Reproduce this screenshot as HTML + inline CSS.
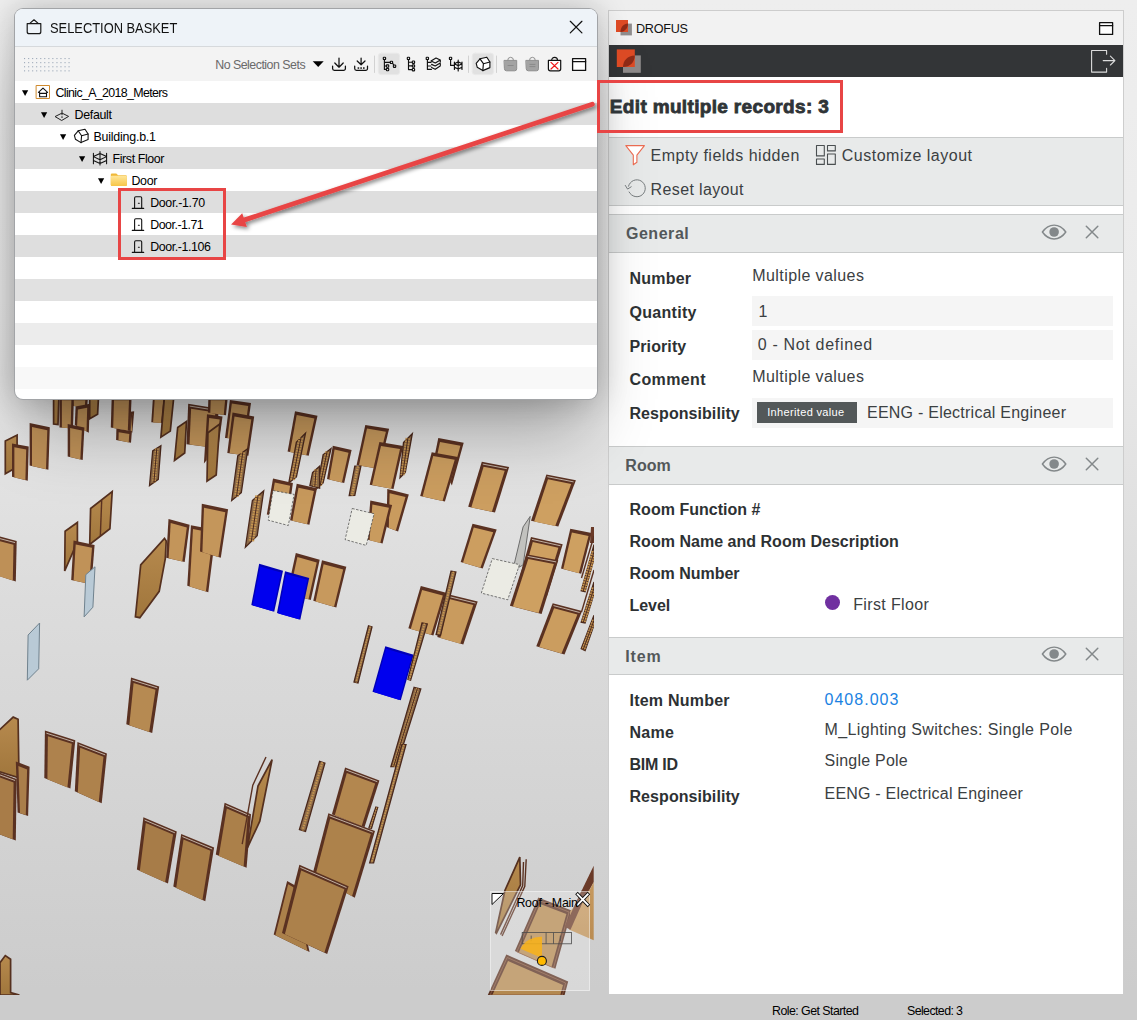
<!DOCTYPE html>
<html><head><meta charset="utf-8"><title>Selection Basket</title>
<style>
*{box-sizing:border-box;margin:0;padding:0}
html,body{width:1137px;height:1020px;overflow:hidden}
body{font-family:"Liberation Sans",sans-serif;position:relative;background:#ccc}
.a{position:absolute}
.tx{position:absolute;white-space:nowrap}
#scene{left:0;top:0;width:1137px;height:1020px;background:linear-gradient(#eeeeee 0px,#ebebeb 300px,#dcdcdc 600px,#cccccc 990px,#cccccc 1020px)}
#panel{left:608px;top:10px;width:516px;height:984px;background:#fff;border:1px solid #cdcdcd;border-bottom:none}
.sec{position:absolute;left:609px;width:514px;background:#e8eaea;border-top:1px solid #c9cbcb;border-bottom:1px solid #c9cbcb}
.inp{position:absolute;left:752px;width:361px;height:30px;background:#f5f5f5}
#basket{left:15px;top:9px;width:582px;height:389.5px;border-radius:8px;background:#fff;box-shadow:0 0 0 1px #a2a4a7,0 0 32px rgba(0,0,0,.235),0 44px 64px -12px rgba(0,0,0,.29);overflow:hidden}
.row{position:absolute;left:0;width:582px;height:22px}
</style></head><body>
<div id="scene" class="a"></div>
<svg class="a" style="left:0;top:399px" width="594" height="596" viewBox="0 399 594 596" stroke-linejoin="miter">
<defs><linearGradient id="tg" x1="0" y1="0" x2="0" y2="1"><stop offset="0" stop-color="#c79a5f"/><stop offset="1" stop-color="#ba8c52"/></linearGradient><linearGradient id="dg" x1="0" y1="0" x2="0" y2="1"><stop offset="0" stop-color="#b78a4e"/><stop offset="1" stop-color="#a0763c"/></linearGradient></defs>
<polygon points="5.3,441.1 17.1,435.1 17.1,467.1 5.3,473.8" fill="url(#dg)" stroke="#55301f" stroke-width="1.7"/>
<polygon points="12.0,443.4 28.7,446.4 27.8,480.7 12.0,476.8" fill="#5a3121"/>
<polygon points="14.4,447.3 26.2,449.4 25.4,480.1 14.4,477.4" fill="#be9057"/>
<polygon points="29.6,423.1 49.8,427.2 48.4,469.8 29.6,465.4" fill="#5a3121"/>
<polygon points="32.0,427.1 47.3,430.2 46.0,469.2 32.0,465.9" fill="#bf9158"/>
<polygon points="53.6,396.8 58.9,396.8 58.0,424.6 53.6,424.0" fill="url(#dg)" stroke="#55301f" stroke-width="1.7"/>
<polygon points="70.4,396.8 88.0,396.8 87.1,408.2 71.2,405.6" fill="#5a3121"/>
<polygon points="73.1,400.2 85.3,400.2 84.7,407.8 73.7,406.0" fill="#c09258"/>
<polygon points="89.7,396.8 98.5,396.8 97.6,414.3 89.7,418.7" fill="url(#dg)" stroke="#55301f" stroke-width="1.7"/>
<polygon points="59.5,396.8 73.9,396.8 73.0,428.4 59.5,427.5" fill="#5a3121"/>
<polygon points="61.9,400.2 71.4,400.2 70.6,428.3 61.9,427.7" fill="#c09258"/>
<polygon points="75.6,406.4 89.7,403.8 88.8,432.8 74.8,424.9" fill="#5a3121"/>
<polygon points="77.9,409.5 87.2,407.7 86.5,431.5 77.1,426.2" fill="#c09258"/>
<polygon points="67.7,424.0 84.4,427.5 82.7,460.1 67.7,456.6" fill="#5a3121"/>
<polygon points="70.1,428.0 81.9,430.5 80.3,459.5 70.1,457.1" fill="#c09258"/>
<polygon points="130.2,411.7 134.2,411.2 132.3,432.8 130.2,431.1" fill="#5a3121"/>
<polygon points="132.0,413.9 132.2,413.9 130.6,431.4 132.0,432.6" fill="#c29459"/>
<polygon points="116.4,428.4 131.9,431.1 131.0,442.8 116.1,439.9" fill="#5a3121"/>
<polygon points="118.7,432.3 129.3,434.1 128.7,442.4 118.5,440.3" fill="#c19359"/>
<polygon points="111.7,396.8 131.6,396.8 130.2,431.1 110.8,427.5" fill="#5a3121"/>
<polygon points="114.0,400.2 129.0,400.2 127.8,430.6 113.2,428.0" fill="#c19359"/>
<polygon points="153.0,396.8 165.3,396.8 162.7,423.1 151.3,422.3" fill="#5a3121"/>
<polygon points="154.7,399.2 163.3,399.2 160.9,423.0 153.1,422.4" fill="#c2945a"/>
<polygon points="160.9,437.2 164.5,396.8 173.8,396.8 170.3,431.1" fill="url(#dg)" stroke="#55301f" stroke-width="1.7"/>
<polygon points="177.7,427.5 186.5,421.4 184.7,453.0 174.5,460.4" fill="url(#dg)" stroke="#55301f" stroke-width="1.7"/>
<polygon points="188.2,403.8 219.0,408.7 214.6,447.8 186.5,444.3" fill="#5a3121"/>
<polygon points="191.1,408.7 215.4,412.6 211.5,447.4 189.5,444.6" fill="#c4965b"/>
<polyline points="189.7,406.1 217.2,410.5" fill="none" stroke="#d9cfc4" stroke-width=".8"/>
<polygon points="152.7,450.9 160.9,445.7 158.3,479.4 149.5,485.6" fill="#8c6a48" stroke="#4a281b" stroke-width="1.3"/>
<line x1="156.8" y1="448.3" x2="153.9" y2="482.5" stroke="#c79650" stroke-width="3.7" stroke-dasharray="1.6 1"/>
<line x1="156.8" y1="448.3" x2="153.9" y2="482.5" stroke="#4e2a1c" stroke-width="1"/>
<polygon points="90.6,508.5 112.2,491.7 109.9,528.7 89.7,544.5" fill="url(#dg)" stroke="#55301f" stroke-width="1.7"/>
<polyline points="101.7,500.2 100.3,536.6" fill="none" stroke="#5a3121" stroke-width="1.4"/>
<polygon points="65.1,531.3 77.4,522.5 77.4,541.9 64.7,570.9" fill="url(#dg)" stroke="#55301f" stroke-width="1.7"/>
<polygon points="73.5,540.6 94.6,544.9 91.5,584.3 71.2,579.9" fill="#5a3121"/>
<polygon points="75.7,544.5 92.0,547.8 89.1,583.8 73.6,580.4" fill="#c09258"/>
<polygon points="-10.6,533.8 16.7,541.0 15.8,581.6 -10.6,572.8" fill="#5a3121"/>
<polygon points="-7.5,539.2 13.5,544.7 12.8,580.6 -7.5,573.9" fill="#be9057"/>
<polyline points="-9.0,536.3 15.1,542.6" fill="none" stroke="#d9cfc4" stroke-width=".8"/>
<polygon points="140.7,564.9 164.5,538.4 166.2,541.0 165.3,558.6 159.2,591.3 139.8,617.7 135.4,616.8" fill="url(#dg)" stroke="#55301f" stroke-width="1.7"/>
<polygon points="168.5,519.0 189.6,524.8 184.7,562.1 166.2,557.7" fill="#5a3121"/>
<polygon points="170.7,523.1 186.8,527.6 182.3,561.5 168.6,558.3" fill="#c3955a"/>
<polygon points="190.9,525.2 216.0,530.1 208.3,592.2 187.3,585.7" fill="#5a3121"/>
<polygon points="193.0,529.1 213.2,533.0 205.9,591.5 189.7,586.4" fill="#c4965b"/>
<polygon points="208.4,396.8 227.8,396.8 226.0,415.2 207.9,412.6" fill="#5a3121"/>
<polygon points="210.7,400.2 225.1,400.2 223.7,414.9 210.3,412.9" fill="#c4965b"/>
<polygon points="207.0,414.3 222.5,416.5 218.5,446.0 203.9,463.6" fill="#5a3121"/>
<polygon points="209.2,418.1 219.7,419.5 215.6,449.5 206.5,460.5" fill="#c4965b"/>
<polygon points="207.9,432.8 219.7,424.0 216.2,475.0 207.0,481.2" fill="url(#dg)" stroke="#55301f" stroke-width="1.7"/>
<polygon points="229.9,399.9 251.0,402.9 246.1,439.0 225.0,438.1" fill="#5a3121"/>
<polygon points="231.8,403.6 248.2,405.9 243.7,438.9 227.4,438.2" fill="#c5975b"/>
<polygon points="232.5,412.6 254.2,416.5 248.4,455.7 227.3,453.0" fill="#5a3121"/>
<polygon points="234.5,416.4 251.3,419.4 246.0,455.4 229.6,453.3" fill="#c5975b"/>
<polygon points="237.8,455.7 247.8,448.6 241.3,492.6 231.7,500.5" fill="#8c6a48" stroke="#4a281b" stroke-width="1.3"/>
<line x1="242.8" y1="452.2" x2="236.5" y2="496.6" stroke="#c79650" stroke-width="4.7" stroke-dasharray="1.6 1"/>
<line x1="242.8" y1="452.2" x2="236.5" y2="496.6" stroke="#4e2a1c" stroke-width="1"/>
<polygon points="295.0,411.2 317.5,415.8 308.7,455.7 287.6,451.6" fill="#5a3121"/>
<polygon points="296.7,415.0 314.4,418.6 306.3,455.2 290.0,452.1" fill="#c7995c"/>
<polygon points="296.4,442.1 305.5,433.3 296.4,476.8 288.8,483.0" fill="#8c6a48" stroke="#4a281b" stroke-width="1.3"/>
<line x1="301.0" y1="437.7" x2="292.6" y2="479.9" stroke="#c79650" stroke-width="4.8" stroke-dasharray="1.6 1"/>
<line x1="301.0" y1="437.7" x2="292.6" y2="479.9" stroke="#4e2a1c" stroke-width="1"/>
<polygon points="332.8,445.7 351.6,449.9 344.2,483.0 327.0,479.1" fill="#5a3121"/>
<polygon points="334.6,449.5 348.5,452.7 341.9,482.4 329.3,479.6" fill="#c89a5d"/>
<polygon points="323.1,454.8 331.0,448.6 323.1,483.0 317.0,488.2" fill="#8c6a48" stroke="#4a281b" stroke-width="1.3"/>
<line x1="327.1" y1="451.7" x2="320.1" y2="485.6" stroke="#c79650" stroke-width="3.8" stroke-dasharray="1.6 1"/>
<line x1="327.1" y1="451.7" x2="320.1" y2="485.6" stroke="#4e2a1c" stroke-width="1"/>
<polygon points="312.6,472.4 319.6,466.2 319.6,488.2 309.9,485.6" fill="#8c6a48" stroke="#4a281b" stroke-width="1.3"/>
<line x1="316.1" y1="469.3" x2="314.8" y2="486.9" stroke="#c79650" stroke-width="3.6" stroke-dasharray="1.6 1"/>
<line x1="316.1" y1="469.3" x2="314.8" y2="486.9" stroke="#4e2a1c" stroke-width="1"/>
<polygon points="365.3,424.9 389.1,428.8 379.4,468.9 356.6,465.0" fill="#5a3121"/>
<polygon points="367.0,428.6 385.9,431.7 377.0,468.5 358.9,465.4" fill="#c99b5e"/>
<polygon points="379.4,442.1 403.2,446.0 393.5,489.1 369.7,484.7" fill="#5a3121"/>
<polygon points="381.0,445.9 400.0,448.9 391.1,488.7 372.1,485.1" fill="#c99b5e"/>
<polygon points="354.8,466.2 360.9,466.2 354.8,495.3 349.2,495.6" fill="#8c6a48" stroke="#4a281b" stroke-width="1.3"/>
<line x1="357.9" y1="466.2" x2="352.0" y2="495.4" stroke="#c79650" stroke-width="2.3" stroke-dasharray="1.6 1"/>
<polygon points="273.0,478.6 292.9,483.0 288.0,518.1 266.8,514.6" fill="#5a3121"/>
<polygon points="274.8,482.4 290.1,485.8 285.6,517.7 269.2,515.0" fill="#c6985c"/>
<polygon points="273.0,490.5 294.1,494.4 288.3,525.5 268.2,520.2" fill="#ebebe4" stroke="#444" stroke-width=".7" stroke-dasharray="2.5 1.5"/>
<polygon points="296.7,483.8 317.0,488.2 309.4,524.8 290.1,520.2" fill="#5a3121"/>
<polygon points="298.5,487.7 313.9,491.0 307.1,524.3 292.4,520.8" fill="#c7995c"/>
<polygon points="252.4,500.5 263.7,490.9 257.2,535.7 245.4,547.2" fill="#8c6a48" stroke="#4a281b" stroke-width="1.3"/>
<line x1="258.0" y1="495.7" x2="251.3" y2="541.4" stroke="#c79650" stroke-width="5.6" stroke-dasharray="1.6 1"/>
<line x1="258.0" y1="495.7" x2="251.3" y2="541.4" stroke="#4e2a1c" stroke-width="1"/>
<polygon points="201.8,503.7 228.1,509.3 220.8,557.7 200.0,551.6" fill="#5a3121"/>
<polygon points="204.0,507.7 225.3,512.2 218.4,557.0 202.4,552.3" fill="#c4965b"/>
<polygon points="387.3,489.1 408.8,494.4 398.1,531.5 386.5,526.9" fill="#5a3121"/>
<polygon points="389.6,493.2 405.5,497.1 395.8,530.6 388.8,527.9" fill="#c99b5e"/>
<polygon points="370.3,500.5 392.1,504.9 382.6,543.6 367.1,539.6" fill="#5a3121"/>
<polygon points="372.4,504.4 388.9,507.8 380.3,543.0 369.5,540.2" fill="#c99b5e"/>
<polygon points="352.2,508.5 374.1,513.7 366.2,545.4 345.1,539.6" fill="#ebebe4" stroke="#444" stroke-width=".7" stroke-dasharray="2.5 1.5"/>
<polygon points="403.5,442.5 412.3,433.7 405.3,472.4 400.0,477.7" fill="#8c6a48" stroke="#4a281b" stroke-width="1.3"/>
<line x1="407.9" y1="438.1" x2="402.6" y2="475.0" stroke="#c79650" stroke-width="4.7" stroke-dasharray="1.6 1"/>
<line x1="407.9" y1="438.1" x2="402.6" y2="475.0" stroke="#4e2a1c" stroke-width="1"/>
<polygon points="438.3,438.1 463.7,442.8 451.9,485.6 435.2,453.0" fill="#5a3121"/>
<polygon points="440.0,441.9 460.4,445.7 450.3,482.4 436.9,456.4" fill="#cb9d5f"/>
<polygon points="431.7,452.2 458.0,456.9 444.9,501.4 420.2,496.1" fill="#5a3121"/>
<polygon points="433.2,455.9 454.7,459.8 442.5,500.9 422.6,496.6" fill="#cb9d5f"/>
<polygon points="481.8,461.8 509.1,467.1 495.0,512.5 468.2,506.7" fill="#5a3121"/>
<polygon points="483.6,466.7 504.7,470.8 491.9,511.8 471.3,507.4" fill="#cc9e60"/>
<polyline points="482.8,464.1 506.9,468.7" fill="none" stroke="#d9cfc4" stroke-width=".8"/>
<polygon points="546.4,474.5 575.9,480.3 558.3,526.6 531.0,520.8" fill="#5a3121"/>
<polygon points="548.0,479.3 571.2,483.9 555.2,525.9 534.1,521.4" fill="#cea061"/>
<polyline points="547.3,476.7 573.6,481.9" fill="none" stroke="#d9cfc4" stroke-width=".8"/>
<polygon points="472.5,523.8 496.7,529.6 482.7,568.4 460.7,562.1" fill="#5a3121"/>
<polygon points="473.8,527.6 493.2,532.2 480.4,567.8 463.0,562.8" fill="#cc9e60"/>
<polygon points="523.1,526.9 530.2,516.4 523.1,564.9 512.6,570.9" fill="#c2c2bf" stroke="#6c6c6c" stroke-width="1"/>
<polygon points="85.8,574.7 95.0,566.8 92.9,607.2 84.1,616.9" fill="#b9cad6" stroke="#70828e" stroke-width="1"/>
<polygon points="28.1,635.0 39.6,623.0 38.7,668.8 27.3,680.2" fill="#b9cad6" stroke="#70828e" stroke-width="1"/>
<polygon points="131.0,677.6 159.2,686.4 152.2,733.0 126.3,724.2" fill="#5a3121"/>
<polygon points="133.6,683.0 155.5,689.8 149.2,732.0 129.3,725.2" fill="#b68a52"/>
<polyline points="132.4,680.1 157.3,687.9" fill="none" stroke="#d9cfc4" stroke-width=".8"/>
<polygon points="295.8,553.0 319.7,559.7 310.8,600.0 287.0,593.3" fill="#5a3121"/>
<polygon points="297.4,557.0 316.7,562.4 308.5,599.3 289.3,594.0" fill="#c7995c"/>
<polygon points="322.0,560.3 346.3,566.7 336.3,607.5 313.3,600.8" fill="#5a3121"/>
<polygon points="323.6,564.2 343.2,569.4 334.0,606.8 315.6,601.5" fill="#c7995d"/>
<polygon points="259.2,563.8 283.0,570.8 274.2,611.7 251.3,605.0" fill="#0000b8"/>
<polygon points="260.2,566.4 281.1,572.5 272.8,611.3 252.7,605.4" fill="#0000ee"/>
<polygon points="285.0,571.3 309.2,578.0 300.3,619.7 277.0,613.0" fill="#0000b8"/>
<polygon points="286.0,573.9 307.3,579.8 298.9,619.3 278.4,613.4" fill="#0000ee"/>
<polygon points="368.5,625.8 372.0,627.0 358.0,683.0 354.0,682.0" fill="#8c6a48" stroke="#4a281b" stroke-width="1.3"/>
<line x1="370.2" y1="626.4" x2="356.0" y2="682.5" stroke="#c79650" stroke-width="1.4" stroke-dasharray="1.6 1"/>
<polygon points="385.3,646.3 413.7,654.7 400.8,700.3 372.5,691.7" fill="#0000b8"/>
<polygon points="386.1,648.8 411.7,656.4 399.4,699.9 373.9,692.1" fill="#0000ee"/>
<polygon points="420.8,586.1 446.1,592.8 433.4,635.4 408.4,628.3" fill="#5a3121"/>
<polygon points="422.1,590.0 442.8,595.4 431.1,634.7 410.8,629.0" fill="#c99b5e"/>
<polygon points="447.1,594.0 477.7,601.6 463.3,644.5 437.3,637.1" fill="#5a3121"/>
<polygon points="449.2,599.1 473.3,605.0 460.3,643.7 440.3,638.0" fill="#c99b5e"/>
<polyline points="448.2,596.4 475.6,603.1" fill="none" stroke="#d9cfc4" stroke-width=".8"/>
<polygon points="451.0,571.2 455.9,572.0 440.5,635.4 436.1,634.5" fill="#8c6a48" stroke="#4a281b" stroke-width="1.3"/>
<line x1="453.5" y1="571.6" x2="438.3" y2="634.9" stroke="#c79650" stroke-width="1.9" stroke-dasharray="1.6 1"/>
<polygon points="422.0,623.0 427.3,623.9 410.6,680.2 407.9,679.3" fill="#8c6a48" stroke="#4a281b" stroke-width="1.3"/>
<line x1="424.6" y1="623.5" x2="409.2" y2="679.8" stroke="#c79650" stroke-width="2.0" stroke-dasharray="1.6 1"/>
<polygon points="552.7,603.3 582.1,611.1 564.5,654.4 536.3,646.3" fill="#5a3121"/>
<polygon points="554.1,608.3 577.4,614.4 561.5,653.5 539.3,647.1" fill="#cb9d5f"/>
<polyline points="553.5,605.6 579.7,612.5" fill="none" stroke="#d9cfc4" stroke-width=".8"/>
<polygon points="531.0,537.1 562.7,544.2 547.0,596.0 516.0,590.0" fill="#5a3121"/>
<polygon points="532.8,542.0 558.4,547.7 543.9,595.4 519.1,590.6" fill="#cea061"/>
<polyline points="532.0,539.4 560.6,545.8" fill="none" stroke="#d9cfc4" stroke-width=".8"/>
<polygon points="570.3,528.7 591.7,533.1 581.2,573.8 561.0,568.5" fill="#5a3121"/>
<polygon points="571.9,532.5 588.5,535.9 578.9,573.2 563.3,569.1" fill="#cea061"/>
<polygon points="591.0,527.0 594.0,527.0 594.0,543.0 590.0,543.0" fill="#6a3a28"/>
<polygon points="594.0,544.7 594.0,558.4 585.1,591.8 581.2,590.8" fill="#8c6a48" stroke="#4a281b" stroke-width="1.3"/>
<line x1="594.0" y1="551.5" x2="583.2" y2="591.3" stroke="#c79650" stroke-width="5.2" stroke-dasharray="1.6 1"/>
<line x1="594.0" y1="551.5" x2="583.2" y2="591.3" stroke="#4e2a1c" stroke-width="1"/>
<polygon points="594.0,582.0 594.0,593.7 585.1,623.1 581.2,622.2" fill="#8c6a48" stroke="#4a281b" stroke-width="1.3"/>
<line x1="594.0" y1="587.9" x2="583.2" y2="622.7" stroke="#c79650" stroke-width="4.4" stroke-dasharray="1.6 1"/>
<line x1="594.0" y1="587.9" x2="583.2" y2="622.7" stroke="#4e2a1c" stroke-width="1"/>
<polygon points="594.0,615.3 594.0,625.1 585.1,650.6 581.2,648.6" fill="#8c6a48" stroke="#4a281b" stroke-width="1.3"/>
<line x1="594.0" y1="620.2" x2="583.2" y2="649.6" stroke="#c79650" stroke-width="3.7" stroke-dasharray="1.6 1"/>
<line x1="594.0" y1="620.2" x2="583.2" y2="649.6" stroke="#4e2a1c" stroke-width="1"/>
<polyline points="594.0,536.0 581.5,578.0" fill="none" stroke="#5a3121" stroke-width="1.4"/>
<polyline points="594.0,570.0 581.5,612.0" fill="none" stroke="#5a3121" stroke-width="1.4"/>
<polygon points="526.6,554.2 558.3,560.3 541.6,613.9 509.9,605.8" fill="#5a3121"/>
<polygon points="528.3,559.0 553.9,563.9 538.6,613.1 512.9,606.6" fill="#cea061"/>
<polyline points="527.6,556.4 556.1,561.9" fill="none" stroke="#d9cfc4" stroke-width=".8"/>
<polygon points="492.3,558.6 519.5,564.6 507.7,599.8 481.3,593.1" fill="#ebebe4" stroke="#444" stroke-width=".7" stroke-dasharray="2.5 1.5"/>
<polygon points="-1.8,731.1 13.2,717.1 18.1,719.2 19.0,777.9 -1.8,771.2" fill="url(#dg)" stroke="#55301f" stroke-width="1.7"/>
<polygon points="15.8,761.4 29.6,766.7 28.1,815.9 17.6,812.4" fill="#5a3121"/>
<polygon points="18.4,766.0 27.1,769.4 25.8,815.1 20.0,813.2" fill="#aa7e4a"/>
<polygon points="-10.6,768.9 16.7,779.0 15.8,840.5 -10.6,830.3" fill="#5a3121"/>
<polygon points="-7.5,774.8 13.6,782.5 12.7,839.3 -7.5,831.5" fill="#a87c48"/>
<polyline points="-9.0,771.7 15.1,780.5" fill="none" stroke="#d9cfc4" stroke-width=".8"/>
<polygon points="44.9,730.6 75.3,740.3 70.4,788.6 44.3,778.1" fill="#5a3121"/>
<polygon points="47.9,736.2 71.8,743.8 67.4,787.4 47.4,779.3" fill="#ae824d"/>
<polyline points="46.4,733.2 73.5,741.8" fill="none" stroke="#d9cfc4" stroke-width=".8"/>
<polygon points="77.4,742.0 106.9,753.5 101.7,803.2 74.8,791.3" fill="#5a3121"/>
<polygon points="80.2,747.8 103.5,756.8 98.7,801.9 77.8,792.6" fill="#ae824c"/>
<polyline points="78.9,744.7 105.2,754.9" fill="none" stroke="#d9cfc4" stroke-width=".8"/>
<polygon points="143.4,817.3 176.8,831.4 168.0,883.6 136.9,869.6" fill="#5a3121"/>
<polygon points="145.8,823.1 173.1,834.6 165.1,882.3 139.8,870.9" fill="#a77c48"/>
<polyline points="144.6,820.0 174.9,832.8" fill="none" stroke="#d9cfc4" stroke-width=".8"/>
<polygon points="181.2,833.9 214.1,847.6 205.3,901.2 173.3,886.6" fill="#5a3121"/>
<polygon points="183.5,839.6 210.4,850.8 202.4,899.9 176.2,887.9" fill="#a87d48"/>
<polyline points="182.4,836.6 212.2,849.0" fill="none" stroke="#d9cfc4" stroke-width=".8"/>
<polygon points="224.6,802.7 251.0,814.2 246.6,867.8 215.8,854.6" fill="#5a3121"/>
<polygon points="226.8,808.5 247.6,817.5 243.6,866.5 218.8,855.9" fill="#ab804a"/>
<polyline points="225.8,805.4 249.3,815.6" fill="none" stroke="#d9cfc4" stroke-width=".8"/>
<polygon points="258.0,786.0 272.1,759.6 259.8,821.2 247.5,847.6" fill="url(#dg)" stroke="#55301f" stroke-width="1.7"/>
<polyline points="266.0,757.0 252.8,785.1 242.2,844.1" fill="none" stroke="#5a3121" stroke-width="1.4"/>
<polygon points="319.6,761.4 324.9,763.1 305.5,831.4 299.4,829.6" fill="#8c6a48" stroke="#4a281b" stroke-width="1.3"/>
<line x1="322.3" y1="762.3" x2="302.5" y2="830.5" stroke="#c79650" stroke-width="2.1" stroke-dasharray="1.6 1"/>
<polygon points="375.9,807.1 377.7,807.5 371.5,828.2 368.9,827.9" fill="#8c6a48" stroke="#4a281b" stroke-width="1.3"/>
<line x1="376.8" y1="807.3" x2="370.2" y2="828.1" stroke="#c79650" stroke-width="1.1" stroke-dasharray="1.6 1"/>
<polygon points="345.1,767.5 379.4,780.4 364.5,827.3 331.9,814.2" fill="#5a3121"/>
<polygon points="346.8,772.9 375.2,783.5 361.6,826.2 334.8,815.3" fill="#b3874f"/>
<polyline points="346.1,770.0 377.3,781.7" fill="none" stroke="#d9cfc4" stroke-width=".8"/>
<polygon points="328.4,813.3 375.0,830.9 354.8,897.7 312.6,874.0" fill="#5a3121"/>
<polygon points="330.2,818.7 370.8,834.0 352.0,896.2 315.4,875.5" fill="#ad824b"/>
<polyline points="329.4,815.8 372.9,832.2" fill="none" stroke="#d9cfc4" stroke-width=".8"/>
<polygon points="414.1,687.3 420.8,689.0 396.4,766.7 390.9,766.7" fill="#8c6a48" stroke="#4a281b" stroke-width="1.3"/>
<line x1="417.5" y1="688.1" x2="393.6" y2="766.7" stroke="#c79650" stroke-width="2.6" stroke-dasharray="1.6 1"/>
<line x1="417.5" y1="688.1" x2="393.6" y2="766.7" stroke="#4e2a1c" stroke-width="1"/>
<polygon points="401.9,744.7 406.0,744.7 373.6,862.8 369.7,862.8" fill="#8c6a48" stroke="#4a281b" stroke-width="1.3"/>
<line x1="403.9" y1="744.7" x2="371.6" y2="862.8" stroke="#c79650" stroke-width="1.6" stroke-dasharray="1.6 1"/>
<polygon points="287.1,881.0 294.8,885.3 309.6,952.1 273.7,934.5" fill="#5a3121"/>
<polygon points="288.1,884.3 293.4,887.3 307.5,951.1 275.4,935.3" fill="#ab804a"/>
<polygon points="299.4,864.8 348.6,886.3 327.2,953.9 282.0,933.0" fill="#5a3121"/>
<polygon points="301.2,870.4 344.4,889.3 324.4,952.6 284.9,934.3" fill="#ac814b"/>
<polyline points="300.4,867.4 346.5,887.6" fill="none" stroke="#d9cfc4" stroke-width=".8"/>
<polygon points="0.0,962.7 5.3,955.6 10.6,959.2 10.6,992.6 19.4,995.0 0.0,995.0" fill="url(#dg)" stroke="#55301f" stroke-width="1.7"/>
<polygon points="519.8,857.1 520.5,884.9 496.4,933.2 495.7,932.5 504.9,890.5" fill="url(#dg)" stroke="#55301f" stroke-width="1.7"/>
<polyline points="526.2,859.3 524.8,886.3 502.1,936.0" fill="none" stroke="#5a3121" stroke-width="1.4"/>
<polyline points="523.5,862.0 522.7,885.6 500.6,934.6" fill="none" stroke="#5a3121" stroke-width="1.4"/>
<polygon points="538.3,897.6 571.7,910.4 555.4,968.7 514.9,951.0" fill="#5a3121"/>
<polygon points="540.1,903.9 566.4,913.9 551.5,967.0 518.7,952.7" fill="#b3884f"/>
<polygon points="539.3,900.6 569.1,912.0 553.5,967.9 516.8,951.8" fill="none" stroke="#8a5a40" stroke-width=".9"/>
<polygon points="593.7,865.7 581.7,890.5 572.0,911.0 578.0,911.0 593.7,882.0" fill="#6a3a28"/>
<polygon points="570.3,911.1 590.2,889.1 593.7,882.0 593.7,940.3 568.9,929.6" fill="url(#tg)"/>
<polygon points="581.7,890.5 587.5,891.5 570.5,929.8 564.6,926.8" fill="#6a3a28"/>
<polygon points="506.3,954.5 568.2,981.5 564.6,995.0 487.8,995.0" fill="#5a3121"/>
<polygon points="508.0,960.9 563.0,984.9 560.3,995.0 492.4,995.0" fill="#b3884f"/>
<polygon points="507.2,957.5 565.6,983.0 562.4,995.0 490.1,995.0" fill="none" stroke="#8a5a40" stroke-width=".9"/>
</svg>
<svg class="a" style="left:0;top:0" width="1137" height="1020" viewBox="0 0 1137 1020" fill="none">
<rect x="490.500" y="891.500" width="99" height="99" fill="#fff" fill-opacity=".24" stroke="#fff" stroke-opacity=".5" stroke-width="1"/>
<path d="M492 893.500h11.500L492 904.500z" fill="#fff" stroke="#111" stroke-width="1"/>
<g stroke="#4c4c4c" stroke-width=".8"><rect x="522.200" y="932.600" width="49.200" height="11.200"/><path d="M546.100 932.600v11.200M553.500 932.600v11.200M560.300 935.600v5.600M531.200 935.600v5.600"/></g>
<path d="M542 958L520.500 948.800A23 23 0 0 1 542 936.700z" fill="#f7b21a" fill-opacity=".88"/>
<circle cx="541.900" cy="960.900" r="4.500" fill="#ffb900" stroke="#1c1c1c" stroke-width="1.100"/>
<g stroke-linecap="square"><path d="M577.700 894.300l10 10.400M587.700 894.300l-10 10.400" stroke="#111" stroke-width="3.600"/><path d="M577.700 894.300l10 10.400M587.700 894.300l-10 10.400" stroke="#fff" stroke-width="1.900"/></g>
</svg>
<div id="panel" class="a"></div>
<div class="a" style="left:609px;top:11px;width:514px;height:34px;background:#f2f2f2"></div>
<div class="a" style="left:609px;top:45px;width:514px;height:32px;background:#333537"></div>
<div class="sec" style="top:137px;height:69px"></div>
<div class="sec" style="top:214px;height:39px"></div>
<div class="sec" style="top:446px;height:39px"></div>
<div class="sec" style="top:637px;height:38px"></div>
<div class="inp" style="top:296px"></div>
<div class="inp" style="top:330px"></div>
<div class="inp" style="top:398px"></div>
<div class="a" style="left:757px;top:402px;width:100px;height:21px;background:#535859"></div>
<div class="a" style="left:824.7px;top:594.9px;width:15.6px;height:15.6px;border-radius:50%;background:#7030a0"></div>

<div id="basket" class="a">
 <div class="a" style="left:0;top:0;width:582px;height:37px;background:#eef3f8"></div>
 <div class="a" style="left:0;top:37px;width:582px;height:1px;background:#d6d9dc"></div>
 <div class="a" style="left:0;top:38px;width:582px;height:34px;background:#f3f3f3"></div>
 <div class="row" style="top:94px;background:#dedede"></div>
 <div class="row" style="top:138px;background:#dedede"></div>
 <div class="row" style="top:182px;background:#dedede"></div>
 <div class="row" style="top:226px;background:#dedede"></div>
 <div class="row" style="top:270px;background:#e1e1e1"></div>
 <div class="row" style="top:314px;background:#ececec"></div>
 <div class="row" style="top:358px;background:#f8f8f8"></div>
</div>
<svg class="a" style="left:0;top:0" width="1137" height="1020" viewBox="0 0 1137 1020" fill="none" stroke-linecap="round" stroke-linejoin="round">
<!-- basket title icon -->
<g stroke="#1a1a1a" stroke-width="1.2">
 <path d="M27.2 23.6h13.6v8.1a2 2 0 0 1-2 2h-9.6a2 2 0 0 1-2-2z"/>
 <path d="M29.8 23.4l4.2-3.6 4.2 3.6"/>
</g>
<!-- close X -->
<path d="M570.3 21.3l11.6 11.6M581.9 21.3l-11.6 11.6" stroke="#111" stroke-width="1.25"/>
<!-- grip dots -->
<g fill="#9ca8b8">
<rect x="24.0" y="58.0" width="1.1" height="1.1"/><rect x="28.1" y="58.0" width="1.1" height="1.1"/><rect x="32.1" y="58.0" width="1.1" height="1.1"/><rect x="36.1" y="58.0" width="1.1" height="1.1"/><rect x="40.2" y="58.0" width="1.1" height="1.1"/><rect x="44.2" y="58.0" width="1.1" height="1.1"/><rect x="48.3" y="58.0" width="1.1" height="1.1"/><rect x="52.3" y="58.0" width="1.1" height="1.1"/><rect x="56.4" y="58.0" width="1.1" height="1.1"/><rect x="60.4" y="58.0" width="1.1" height="1.1"/><rect x="64.5" y="58.0" width="1.1" height="1.1"/><rect x="68.5" y="58.0" width="1.1" height="1.1"/><rect x="24.0" y="62.1" width="1.1" height="1.1"/><rect x="28.1" y="62.1" width="1.1" height="1.1"/><rect x="32.1" y="62.1" width="1.1" height="1.1"/><rect x="36.1" y="62.1" width="1.1" height="1.1"/><rect x="40.2" y="62.1" width="1.1" height="1.1"/><rect x="44.2" y="62.1" width="1.1" height="1.1"/><rect x="48.3" y="62.1" width="1.1" height="1.1"/><rect x="52.3" y="62.1" width="1.1" height="1.1"/><rect x="56.4" y="62.1" width="1.1" height="1.1"/><rect x="60.4" y="62.1" width="1.1" height="1.1"/><rect x="64.5" y="62.1" width="1.1" height="1.1"/><rect x="68.5" y="62.1" width="1.1" height="1.1"/><rect x="24.0" y="66.2" width="1.1" height="1.1"/><rect x="28.1" y="66.2" width="1.1" height="1.1"/><rect x="32.1" y="66.2" width="1.1" height="1.1"/><rect x="36.1" y="66.2" width="1.1" height="1.1"/><rect x="40.2" y="66.2" width="1.1" height="1.1"/><rect x="44.2" y="66.2" width="1.1" height="1.1"/><rect x="48.3" y="66.2" width="1.1" height="1.1"/><rect x="52.3" y="66.2" width="1.1" height="1.1"/><rect x="56.4" y="66.2" width="1.1" height="1.1"/><rect x="60.4" y="66.2" width="1.1" height="1.1"/><rect x="64.5" y="66.2" width="1.1" height="1.1"/><rect x="68.5" y="66.2" width="1.1" height="1.1"/><rect x="24.0" y="70.3" width="1.1" height="1.1"/><rect x="28.1" y="70.3" width="1.1" height="1.1"/><rect x="32.1" y="70.3" width="1.1" height="1.1"/><rect x="36.1" y="70.3" width="1.1" height="1.1"/><rect x="40.2" y="70.3" width="1.1" height="1.1"/><rect x="44.2" y="70.3" width="1.1" height="1.1"/><rect x="48.3" y="70.3" width="1.1" height="1.1"/><rect x="52.3" y="70.3" width="1.1" height="1.1"/><rect x="56.4" y="70.3" width="1.1" height="1.1"/><rect x="60.4" y="70.3" width="1.1" height="1.1"/><rect x="64.5" y="70.3" width="1.1" height="1.1"/><rect x="68.5" y="70.3" width="1.1" height="1.1"/>
</g>
<!-- dropdown triangle -->
<path d="M312.7 61.3h11l-5.5 5.8z" fill="#000" stroke="none"/>
<!-- download 1 -->
<g stroke="#111" stroke-width="1.25">
 <path d="M332.6 66v2.6a1.8 1.8 0 0 0 1.8 1.8h9.2a1.8 1.8 0 0 0 1.8-1.8V66"/>
 <path d="M339 58v9M334.8 63l4.2 4.2 4.2-4.2"/>
 <path d="M354.7 66v2.6a1.8 1.8 0 0 0 1.8 1.8h9.2a1.8 1.8 0 0 0 1.8-1.8V66"/>
 <path d="M361.1 58v6.6M357.2 61l3.9 3.8 3.9-3.8"/>
</g>
<g fill="#111"><rect x="357.6" y="67.3" width="1.6" height="1.5"/><rect x="360.3" y="67.3" width="1.6" height="1.5"/><rect x="363" y="67.3" width="1.6" height="1.5"/></g>
<!-- separators -->
<g stroke="#d2d2d2" stroke-width="1"><path d="M374.5 56v16.5M468.5 56v16.5M496.5 56v16.5"/></g>
<!-- pressed buttons -->
<rect x="378.3" y="53.2" width="21.4" height="21.4" rx="3" fill="#e1e1e1" stroke="#e9e9e9" stroke-width="1"/>
<rect x="472.2" y="53.2" width="21.4" height="21.4" rx="3" fill="#e1e1e1" stroke="#e9e9e9" stroke-width="1"/>
<!-- tree icon 3 -->
<g stroke="#111" stroke-width="1.15">
 <path d="M384.4 59.8v9.6h1.8M384.4 62.4h5.6M384.4 66h1.8M392.6 63.3l1.2 1.8"/>
 <rect x="383.3" y="57.2" width="2.3" height="2.3" rx=".6"/>
 <rect x="390.3" y="61.2" width="2.3" height="2.3" rx=".6"/>
 <rect x="393.4" y="65" width="2.3" height="2.3" rx=".6"/>
 <rect x="386.4" y="64.9" width="2.3" height="2.3" rx=".6"/>
 <rect x="386.4" y="68.4" width="2.3" height="2.3" rx=".6"/>
 <!-- icon 4 -->
 <path d="M408.5 59.8v9.8h3.6M408.5 62.2h3.6M408.5 65.9h3.6"/>
 <rect x="407.3" y="57.2" width="2.3" height="2.3" rx=".6"/>
 <rect x="412.3" y="61" width="2.3" height="2.3" rx=".6"/>
 <rect x="412.3" y="64.8" width="2.3" height="2.3" rx=".6"/>
 <rect x="412.3" y="68.5" width="2.3" height="2.3" rx=".6"/>
 <!-- icon 5 -->
 <path d="M427.4 59.8v9.6h4M427.4 62.4h3.6M427.4 66h3.6"/>
 <rect x="426.2" y="57.2" width="2.3" height="2.3" rx=".6"/>
 <path d="M431 61l5-3 4.3 2-5 3zM431.6 64.4l3.6 1.6 5-3M431.6 67.4l3.6 1.9 5-3.2M440.3 60v1.8M440.3 63.6v1.8"/>
 <!-- icon 6 -->
 <path d="M450.6 59.8v5.6h3.4"/>
 <rect x="449.4" y="57.2" width="2.3" height="2.3" rx=".6"/>
 <path d="M454.4 62v7.4M462 62v7.4M458.2 60v11M454.4 63.8l3.8-2 3.8 2-3.8 2zM454.4 67.2l3.8 1.8 3.8-1.8"/>
 <!-- cube -->
 <path d="M476.2 63.4l3.8-4.6 6.8-1.6 3.1 4.8v5.6l-7.1 3-5.600-3.400z" fill="#fff"/>
 <path d="M480 58.8l3.4 4.9 6.5-1.7M483.4 63.7l-.6 6.9"/>
</g>
<!-- bags -->
<g stroke="#8e8e8e" stroke-width="1" fill="#a3a3a3">
 <path d="M504.4 60.4h12.3v8.4a2 2 0 0 1-2 2h-8.3a2 2 0 0 1-2-2z"/>
 <path d="M507.7 60.2a2.9 2.9 0 0 1 5.8 0" fill="none"/>
 <path d="M526.2 60.4h12.3v8.4a2 2 0 0 1-2 2h-8.3a2 2 0 0 1-2-2z"/>
 <path d="M529.5 60.2a2.9 2.9 0 0 1 5.8 0" fill="none"/>
</g>
<g stroke="#8a8a8a" stroke-width="1"><path d="M508 65.5h5.2M529.8 64.4h5.2M529.8 66.6h5.2"/></g>
<g stroke="#111" stroke-width="1.2" fill="#fff">
 <path d="M548.4 60.4h12.3v8.4a2 2 0 0 1-2 2h-8.3a2 2 0 0 1-2-2z"/>
 <path d="M551.7 60.2a2.9 2.9 0 0 1 5.8 0" fill="none"/>
</g>
<path d="M551 62.4l7 6.6M558 62.4l-7 6.6" stroke="#f01818" stroke-width="1.2"/>
<g stroke="#111" stroke-width="1.3" fill="#fff">
 <rect x="572.6" y="58.6" width="13" height="11.8"/>
 <path d="M572.6 61.700h13"/>
</g>
<!-- tree expanders -->
<g fill="#000" stroke="none">
 <path d="M22 90.3h6.2l-3.1 5.6z"/><path d="M41 112.3h6.2l-3.1 5.6z"/><path d="M60 134.3h6.2l-3.1 5.6z"/><path d="M79 156.3h6.2l-3.1 5.6z"/><path d="M98 178.3h6.2l-3.1 5.6z"/>
</g>
<!-- row0 icon: model -->
<rect x="36.5" y="85.5" width="13" height="13" fill="#fff" stroke="#cf8a2e" stroke-width="1"/>
<g stroke="#111" stroke-width="1.1"><path d="M38.4 92.4l4.6-4.2 4.6 4.2M39.6 92.6v4.1h6.9v-4.1M39.6 93.4h6.9"/></g>
<!-- row1 icon -->
<g stroke="#222" stroke-width="1"><path d="M55.4 116.4l6.6-3.3 6.6 3.3-6.6 3.9zM62 110.2v4.6M62 116.6v1"/></g>
<!-- row2 icon cube -->
<g stroke="#111" stroke-width="1.1"><path d="M74.4 135.4l3.8-4.6 6.8-1.6 3.1 4.8v5.6l-7.1 3-5.6-3.4z"/><path d="M78.2 130.8l3.4 4.9 6.5-1.7M81.6 135.7l-.6 6.9"/></g>
<!-- row3 icon level -->
<g stroke="#111" stroke-width="1.05"><path d="M93.4 153.2v10.6M106.6 153.2v10.6M100 151.4v13.6M93.4 156.6l6.6-3 6.6 3-6.6 3.2zM93.4 160.6l6.6 3 6.6-3"/></g>
<!-- folder -->
<defs><linearGradient id="fg" x1="0" y1="0" x2="0" y2="1"><stop offset="0" stop-color="#ffe699"/><stop offset="1" stop-color="#f7c64a"/></linearGradient></defs>
<path d="M110.8 174.6a1.2 1.2 0 0 1 1.2-1.2h4.3l1.8 1.9h7.6a1.2 1.2 0 0 1 1.2 1.2v8.2a1.2 1.2 0 0 1-1.2 1.2h-13.7a1.2 1.2 0 0 1-1.2-1.2z" fill="#f0b93a" stroke="none"/>
<path d="M110.8 177a1.2 1.2 0 0 1 1.2-1.2h13.7a1.2 1.2 0 0 1 1.2 1.2v7.7a1.2 1.2 0 0 1-1.2 1.2h-13.7a1.2 1.2 0 0 1-1.2-1.2z" fill="url(#fg)" stroke="none"/>
<!-- door icons -->
<g stroke="#111" stroke-width="1.1">
 <path d="M132.3 208.4h11.4M134.6 208.4v-10.4a1.2 1.2 0 0 1 1.2-1.2h4.7a1.2 1.2 0 0 1 1.2 1.2v10.4M138.4 203.2h.9"/>
 <path d="M132.3 230.4h11.4M134.6 230.4v-10.4a1.2 1.2 0 0 1 1.2-1.2h4.7a1.2 1.2 0 0 1 1.2 1.2v10.4M138.4 225.2h.9"/>
 <path d="M132.3 252.4h11.4M134.6 252.4v-10.4a1.2 1.2 0 0 1 1.2-1.2h4.7a1.2 1.2 0 0 1 1.2 1.2v10.4M138.4 247.2h.9"/>
</g>
<!-- DROFUS logos -->
<rect x="620.5" y="23.6" width="11.4" height="11.8" fill="#8f8c8c"/>
<rect x="616" y="20" width="12" height="12" fill="#dc4a24"/>
<path d="M620.5 32c0-4.5 3-8.2 7.5-8.4 0 4.6-3 8.2-7.5 8.4z" fill="#8e2a16" stroke="none"/>
<rect x="623" y="55.4" width="17.8" height="17.4" fill="#8d8989"/>
<rect x="616.8" y="49.4" width="18" height="17.6" fill="#dc4a24"/>
<path d="M623 67c0-6.600 4.600-11.400 11.800-11.600 0 6.600-4.600 11.400-11.800 11.600z" fill="#8e2a16" stroke="none"/>
<!-- panel window icon -->
<g stroke="#111" stroke-width="1.3" fill="#fff"><rect x="1099.6" y="22.6" width="13" height="11.8"/><path d="M1099.6 25.700h13"/></g>
<!-- logout icon -->
<g stroke="#dcdcdc" stroke-width="1.1"><path d="M1106.6 54.2v-3.700h-15v21.600h15v-3.700M1103.200 60.600h11.600M1110.400 56.200l4.500 4.400-4.500 4.400"/></g>
<!-- filter icon -->
<path d="M625.800 145.600h18.600l-7.500 9.600v7l-3.600 2.600v-9.600z" stroke="#ea6c52" stroke-width="1.1" fill="#fff"/>
<!-- customize icon -->
<g stroke="#4a4f51" stroke-width="1.1"><rect x="816.500" y="145.500" width="7.800" height="10.400"/><rect x="827.500" y="145.500" width="7.800" height="5.400"/><rect x="816.500" y="159" width="7.800" height="5.400"/><rect x="827.500" y="154" width="7.800" height="10.400"/></g>
<!-- reset icon -->
<g stroke="#6f7476" stroke-width=".95"><path d="M628.500 186.200a8.500 8.500 0 1 1 .6 5.800"/><path d="M625.300 185.400l2.300 3.700 3.600-2.300"/></g>
<!-- eye + x icons -->
<g>
 <path d="M1042.400 232c3.200-4.600 7.200-6.900 11.700-6.900s8.500 2.300 11.700 6.900c-3.200 4.600-7.200 6.900-11.700 6.900s-8.500-2.300-11.700-6.900z" stroke="#83888a" stroke-width="1.45"/>
 <circle cx="1054.100" cy="232" r="4.800" fill="#83888a" stroke="none"/>
 <path d="M1086.300 226.300l11.500 11.500M1097.800 226.300l-11.500 11.500" stroke="#83888a" stroke-width="1.5"/>
</g>
<g transform="translate(0 232)">
 <path d="M1042.400 232c3.200-4.600 7.200-6.900 11.700-6.900s8.500 2.300 11.700 6.900c-3.200 4.600-7.200 6.900-11.700 6.900s-8.500-2.300-11.700-6.900z" stroke="#83888a" stroke-width="1.45"/>
 <circle cx="1054.100" cy="232" r="4.800" fill="#83888a" stroke="none"/>
 <path d="M1086.300 226.300l11.500 11.500M1097.800 226.300l-11.500 11.500" stroke="#83888a" stroke-width="1.5"/>
</g>
<g transform="translate(0 422)">
 <path d="M1042.400 232c3.200-4.600 7.200-6.900 11.700-6.900s8.500 2.300 11.700 6.900c-3.200 4.600-7.200 6.900-11.700 6.900s-8.500-2.300-11.700-6.900z" stroke="#83888a" stroke-width="1.45"/>
 <circle cx="1054.100" cy="232" r="4.800" fill="#83888a" stroke="none"/>
 <path d="M1086.300 226.300l11.500 11.500M1097.800 226.300l-11.500 11.500" stroke="#83888a" stroke-width="1.5"/>
</g>
</svg>

<div class="tx" style="left:50.30px;top:20px;font-size:15.4px;line-height:15.4px;color:#111;transform:scaleX(0.8361);transform-origin:0 0;">SELECTION BASKET</div>
<div class="tx" style="left:215.20px;top:59px;font-size:12.4px;line-height:12.4px;color:#6a6a6a;letter-spacing:-0.506px;">No Selection Sets</div>
<div class="tx" style="left:55.50px;top:87px;font-size:12.4px;line-height:12.4px;color:#000;letter-spacing:-0.641px;">Clinic_A_2018_Meters</div>
<div class="tx" style="left:74.50px;top:109px;font-size:12.4px;line-height:12.4px;color:#000;letter-spacing:-0.294px;">Default</div>
<div class="tx" style="left:93.50px;top:131px;font-size:12.4px;line-height:12.4px;color:#000;letter-spacing:-0.206px;">Building.b.1</div>
<div class="tx" style="left:112.50px;top:153px;font-size:12.4px;line-height:12.4px;color:#000;letter-spacing:-0.377px;">First Floor</div>
<div class="tx" style="left:131.50px;top:175px;font-size:12.4px;line-height:12.4px;color:#000;letter-spacing:-0.353px;">Door</div>
<div class="tx" style="left:150.20px;top:197px;font-size:12.4px;line-height:12.4px;color:#000;letter-spacing:-0.329px;">Door.-1.70</div>
<div class="tx" style="left:150.20px;top:219px;font-size:12.4px;line-height:12.4px;color:#000;letter-spacing:-0.484px;">Door.-1.71</div>
<div class="tx" style="left:150.20px;top:241px;font-size:12.4px;line-height:12.4px;color:#000;letter-spacing:-0.395px;">Door.-1.106</div>
<div class="tx" style="left:772.00px;top:1005px;font-size:12.4px;line-height:12.4px;color:#000;letter-spacing:-0.546px;">Role: Get Started</div>
<div class="tx" style="left:907.00px;top:1005px;font-size:12.4px;line-height:12.4px;color:#000;letter-spacing:-0.600px;">Selected: 3</div>
<div class="tx" style="left:516.40px;top:897px;font-size:12.4px;line-height:12.4px;color:#000;letter-spacing:-0.245px;">Roof - Main</div>
<div class="tx" style="left:636.00px;top:23px;font-size:12.6px;line-height:12.6px;color:#111;letter-spacing:-0.237px;">DROFUS</div>
<div class="tx" style="left:609.80px;top:97px;font-size:19px;line-height:19px;font-weight:bold;color:#2f3437;letter-spacing:0.341px;-webkit-text-stroke:0.8px #2f3437;">Edit multiple records: 3</div>
<div class="tx" style="left:650.60px;top:148px;font-size:16px;line-height:16px;color:#3b4042;letter-spacing:0.503px;">Empty fields hidden</div>
<div class="tx" style="left:841.80px;top:148px;font-size:16px;line-height:16px;color:#3b4042;letter-spacing:0.499px;">Customize layout</div>
<div class="tx" style="left:650.60px;top:182px;font-size:16px;line-height:16px;color:#3b4042;letter-spacing:0.360px;">Reset layout</div>
<div class="tx" style="left:625.90px;top:226px;font-size:16px;line-height:16px;font-weight:bold;color:#53585a;letter-spacing:0.551px;">General</div>
<div class="tx" style="left:625.30px;top:458px;font-size:16px;line-height:16px;font-weight:bold;color:#53585a;letter-spacing:0.057px;">Room</div>
<div class="tx" style="left:625.20px;top:649px;font-size:16px;line-height:16px;font-weight:bold;color:#53585a;letter-spacing:0.865px;">Item</div>
<div class="tx" style="left:629.50px;top:271px;font-size:16px;line-height:16px;font-weight:bold;color:#2d3133;letter-spacing:0.209px;">Number</div>
<div class="tx" style="left:629.50px;top:305px;font-size:16px;line-height:16px;font-weight:bold;color:#2d3133;letter-spacing:0.287px;">Quantity</div>
<div class="tx" style="left:629.50px;top:339px;font-size:16px;line-height:16px;font-weight:bold;color:#2d3133;letter-spacing:0.098px;">Priority</div>
<div class="tx" style="left:629.50px;top:372px;font-size:16px;line-height:16px;font-weight:bold;color:#2d3133;letter-spacing:0.370px;">Comment</div>
<div class="tx" style="left:629.50px;top:406px;font-size:16px;line-height:16px;font-weight:bold;color:#2d3133;letter-spacing:0.065px;">Responsibility</div>
<div class="tx" style="left:629.50px;top:502px;font-size:16px;line-height:16px;font-weight:bold;color:#2d3133;letter-spacing:0.025px;">Room Function #</div>
<div class="tx" style="left:629.50px;top:534px;font-size:16px;line-height:16px;font-weight:bold;color:#2d3133;letter-spacing:0.025px;">Room Name and Room Description</div>
<div class="tx" style="left:629.50px;top:566px;font-size:16px;line-height:16px;font-weight:bold;color:#2d3133;letter-spacing:-0.013px;">Room Number</div>
<div class="tx" style="left:629.50px;top:598px;font-size:16px;line-height:16px;font-weight:bold;color:#2d3133;letter-spacing:-0.055px;">Level</div>
<div class="tx" style="left:629.50px;top:693px;font-size:16px;line-height:16px;font-weight:bold;color:#2d3133;letter-spacing:0.220px;">Item Number</div>
<div class="tx" style="left:629.50px;top:725px;font-size:16px;line-height:16px;font-weight:bold;color:#2d3133;letter-spacing:0.241px;">Name</div>
<div class="tx" style="left:629.50px;top:757px;font-size:16px;line-height:16px;font-weight:bold;color:#2d3133;letter-spacing:-0.256px;">BIM ID</div>
<div class="tx" style="left:629.50px;top:789px;font-size:16px;line-height:16px;font-weight:bold;color:#2d3133;letter-spacing:0.065px;">Responsibility</div>
<div class="tx" style="left:752.30px;top:268px;font-size:16px;line-height:16px;color:#3b4042;letter-spacing:0.412px;">Multiple values</div>
<div class="tx" style="left:758.60px;top:304px;font-size:16px;line-height:16px;color:#3b4042;">1</div>
<div class="tx" style="left:757.70px;top:337px;font-size:16px;line-height:16px;color:#3b4042;letter-spacing:0.682px;">0 - Not defined</div>
<div class="tx" style="left:752.30px;top:369px;font-size:16px;line-height:16px;color:#3b4042;letter-spacing:0.412px;">Multiple values</div>
<div class="tx" style="left:767.20px;top:407px;font-size:11px;line-height:11px;color:#fff;letter-spacing:0.345px;">Inherited value</div>
<div class="tx" style="left:867.00px;top:405px;font-size:16px;line-height:16px;color:#3b4042;letter-spacing:0.241px;">EENG - Electrical Engineer</div>
<div class="tx" style="left:853.20px;top:597px;font-size:16px;line-height:16px;color:#3b4042;letter-spacing:0.370px;">First Floor</div>
<div class="tx" style="left:824.50px;top:692px;font-size:16px;line-height:16px;color:#1a82e2;letter-spacing:1.024px;">0408.003</div>
<div class="tx" style="left:824.50px;top:722px;font-size:16px;line-height:16px;color:#3b4042;letter-spacing:0.362px;">M_Lighting Switches: Single Pole</div>
<div class="tx" style="left:824.50px;top:753px;font-size:16px;line-height:16px;color:#3b4042;letter-spacing:0.225px;">Single Pole</div>
<div class="tx" style="left:824.50px;top:786px;font-size:16px;line-height:16px;color:#3b4042;letter-spacing:0.217px;">EENG - Electrical Engineer</div>
<svg class="a" style="left:0;top:0" width="1137" height="1020" viewBox="0 0 1137 1020" fill="none">
<defs><filter id="ash" x="-5%" y="-20%" width="110%" height="150%"><feGaussianBlur in="SourceAlpha" stdDeviation="1.9"/><feOffset dx="1.6" dy="2.2"/><feComponentTransfer><feFuncA type="linear" slope=".5"/></feComponentTransfer><feMerge><feMergeNode/><feMergeNode in="SourceGraphic"/></feMerge></filter></defs>
<rect x="119.500" y="189.500" width="105" height="69" stroke="#e84545" stroke-width="3"/>
<rect x="598.500" y="81.500" width="243" height="50" stroke="#e84545" stroke-width="3"/>
<g filter="url(#ash)">
<path d="M592.300 104.300L240 221.400" stroke="#e84545" stroke-width="4.800" stroke-linecap="round"/>
<path d="M231.100 224.400l11.100-11.100 4.700 13.700z" fill="#e84545"/>
</g>
</svg>

</body></html>
